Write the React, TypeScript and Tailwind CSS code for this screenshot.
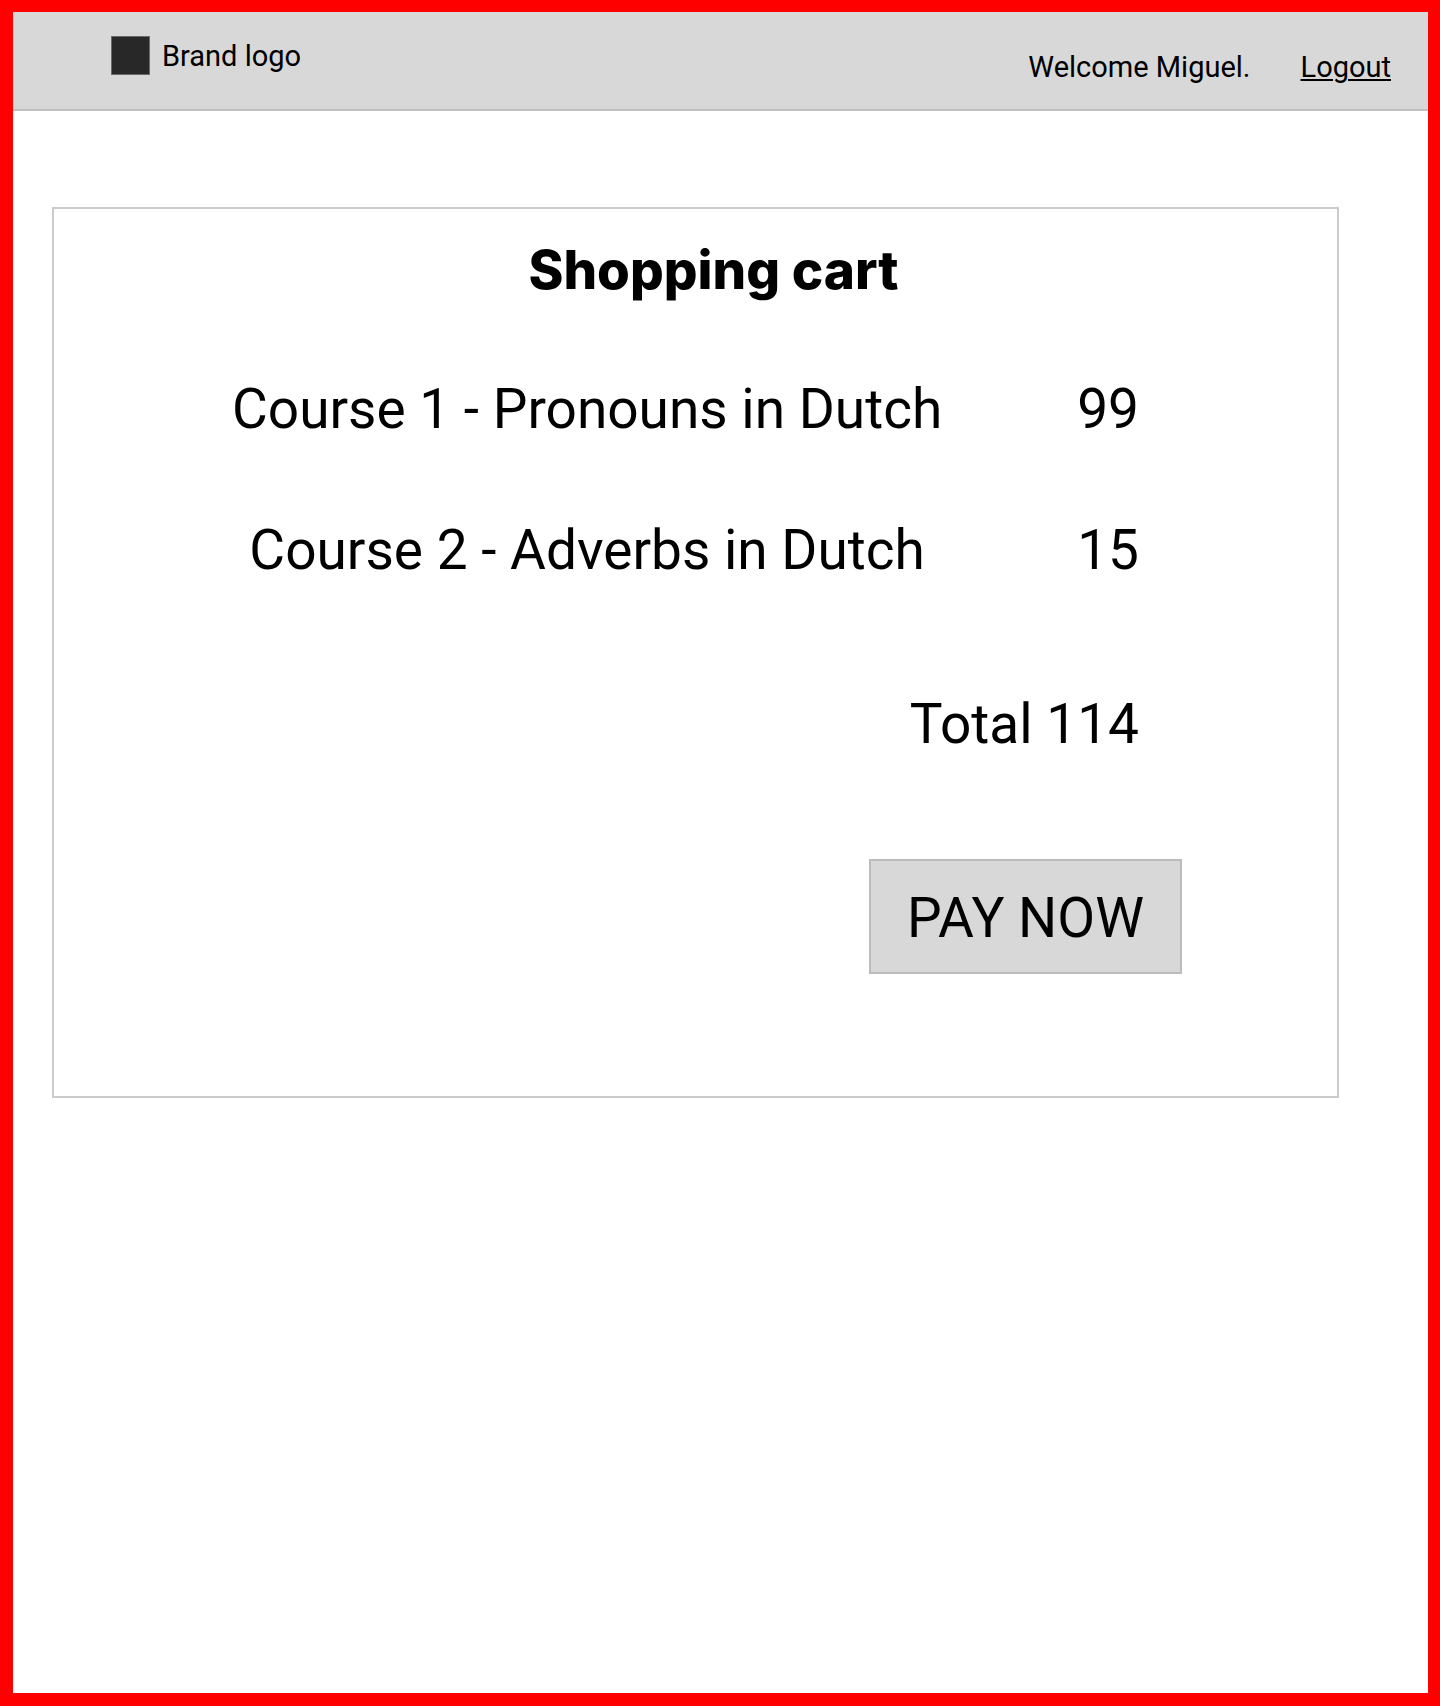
const items = [
  { name: "Course 1 - Pronouns in Dutch", price: 99 },
  { name: "Course 2 - Adverbs in Dutch", price: 15 },
];

const total = items.reduce((sum, item) => sum + item.price, 0);

function Header() {
  return (
    <header className="flex items-start justify-between border-b-2 border-[#c0c0c0] bg-[#d8d8d8] pt-6 pr-[37px] pb-[22px] pl-[98px] text-[29px] leading-10">
      <a href="#" className="flex items-start gap-3">
        <span className="size-[39px] border border-[#6a6a6a] bg-[#282828]" />
        <span>Brand logo</span>
      </a>
      <div className="flex gap-[50px] pt-[11px]">
        <span>Welcome Miguel.</span>
        <a href="#" className="underline decoration-2 underline-offset-2">
          Logout
        </a>
      </div>
    </header>
  );
}

function Cart() {
  return (
    <main className="mt-24 mr-[89px] ml-[39px] border-2 border-[#cbcbcb] pt-[25px] pb-[122px]">
      <h1 className="pl-9 text-center font-['Inter',sans-serif] text-[53px] leading-[72px] font-extrabold">
        Shopping cart
      </h1>
      <div className="mt-[67px] pr-[198px] pl-[178px]">
        <table className="w-full text-[55px] leading-[72px]">
          <tbody>
            {items.map((item) => (
              <tr key={item.name}>
                <td className="pb-[69px] text-center whitespace-nowrap">{item.name}</td>
                <td className="w-full pb-[69px] text-right">{item.price}</td>
              </tr>
            ))}
          </tbody>
          <tfoot>
            <tr>
              <td colSpan={2} className="pt-[33px] text-right">
                Total {total}
              </td>
            </tr>
          </tfoot>
        </table>
      </div>
      <div className="mt-[99px] mr-[155px] flex justify-end">
        <button
          type="button"
          className="border-2 border-[#bcbcbc] bg-[#d8d8d8] px-9 pt-[21px] pb-[18px] text-[55px] leading-[72px]"
        >
          PAY NOW
        </button>
      </div>
    </main>
  );
}

export default function App() {
  return (
    <div className="min-h-screen border-[13px] border-t-12 border-r-12 border-[#ff0000] bg-white font-['Roboto',sans-serif] text-black">
      <Header />
      <Cart />
    </div>
  );
}
